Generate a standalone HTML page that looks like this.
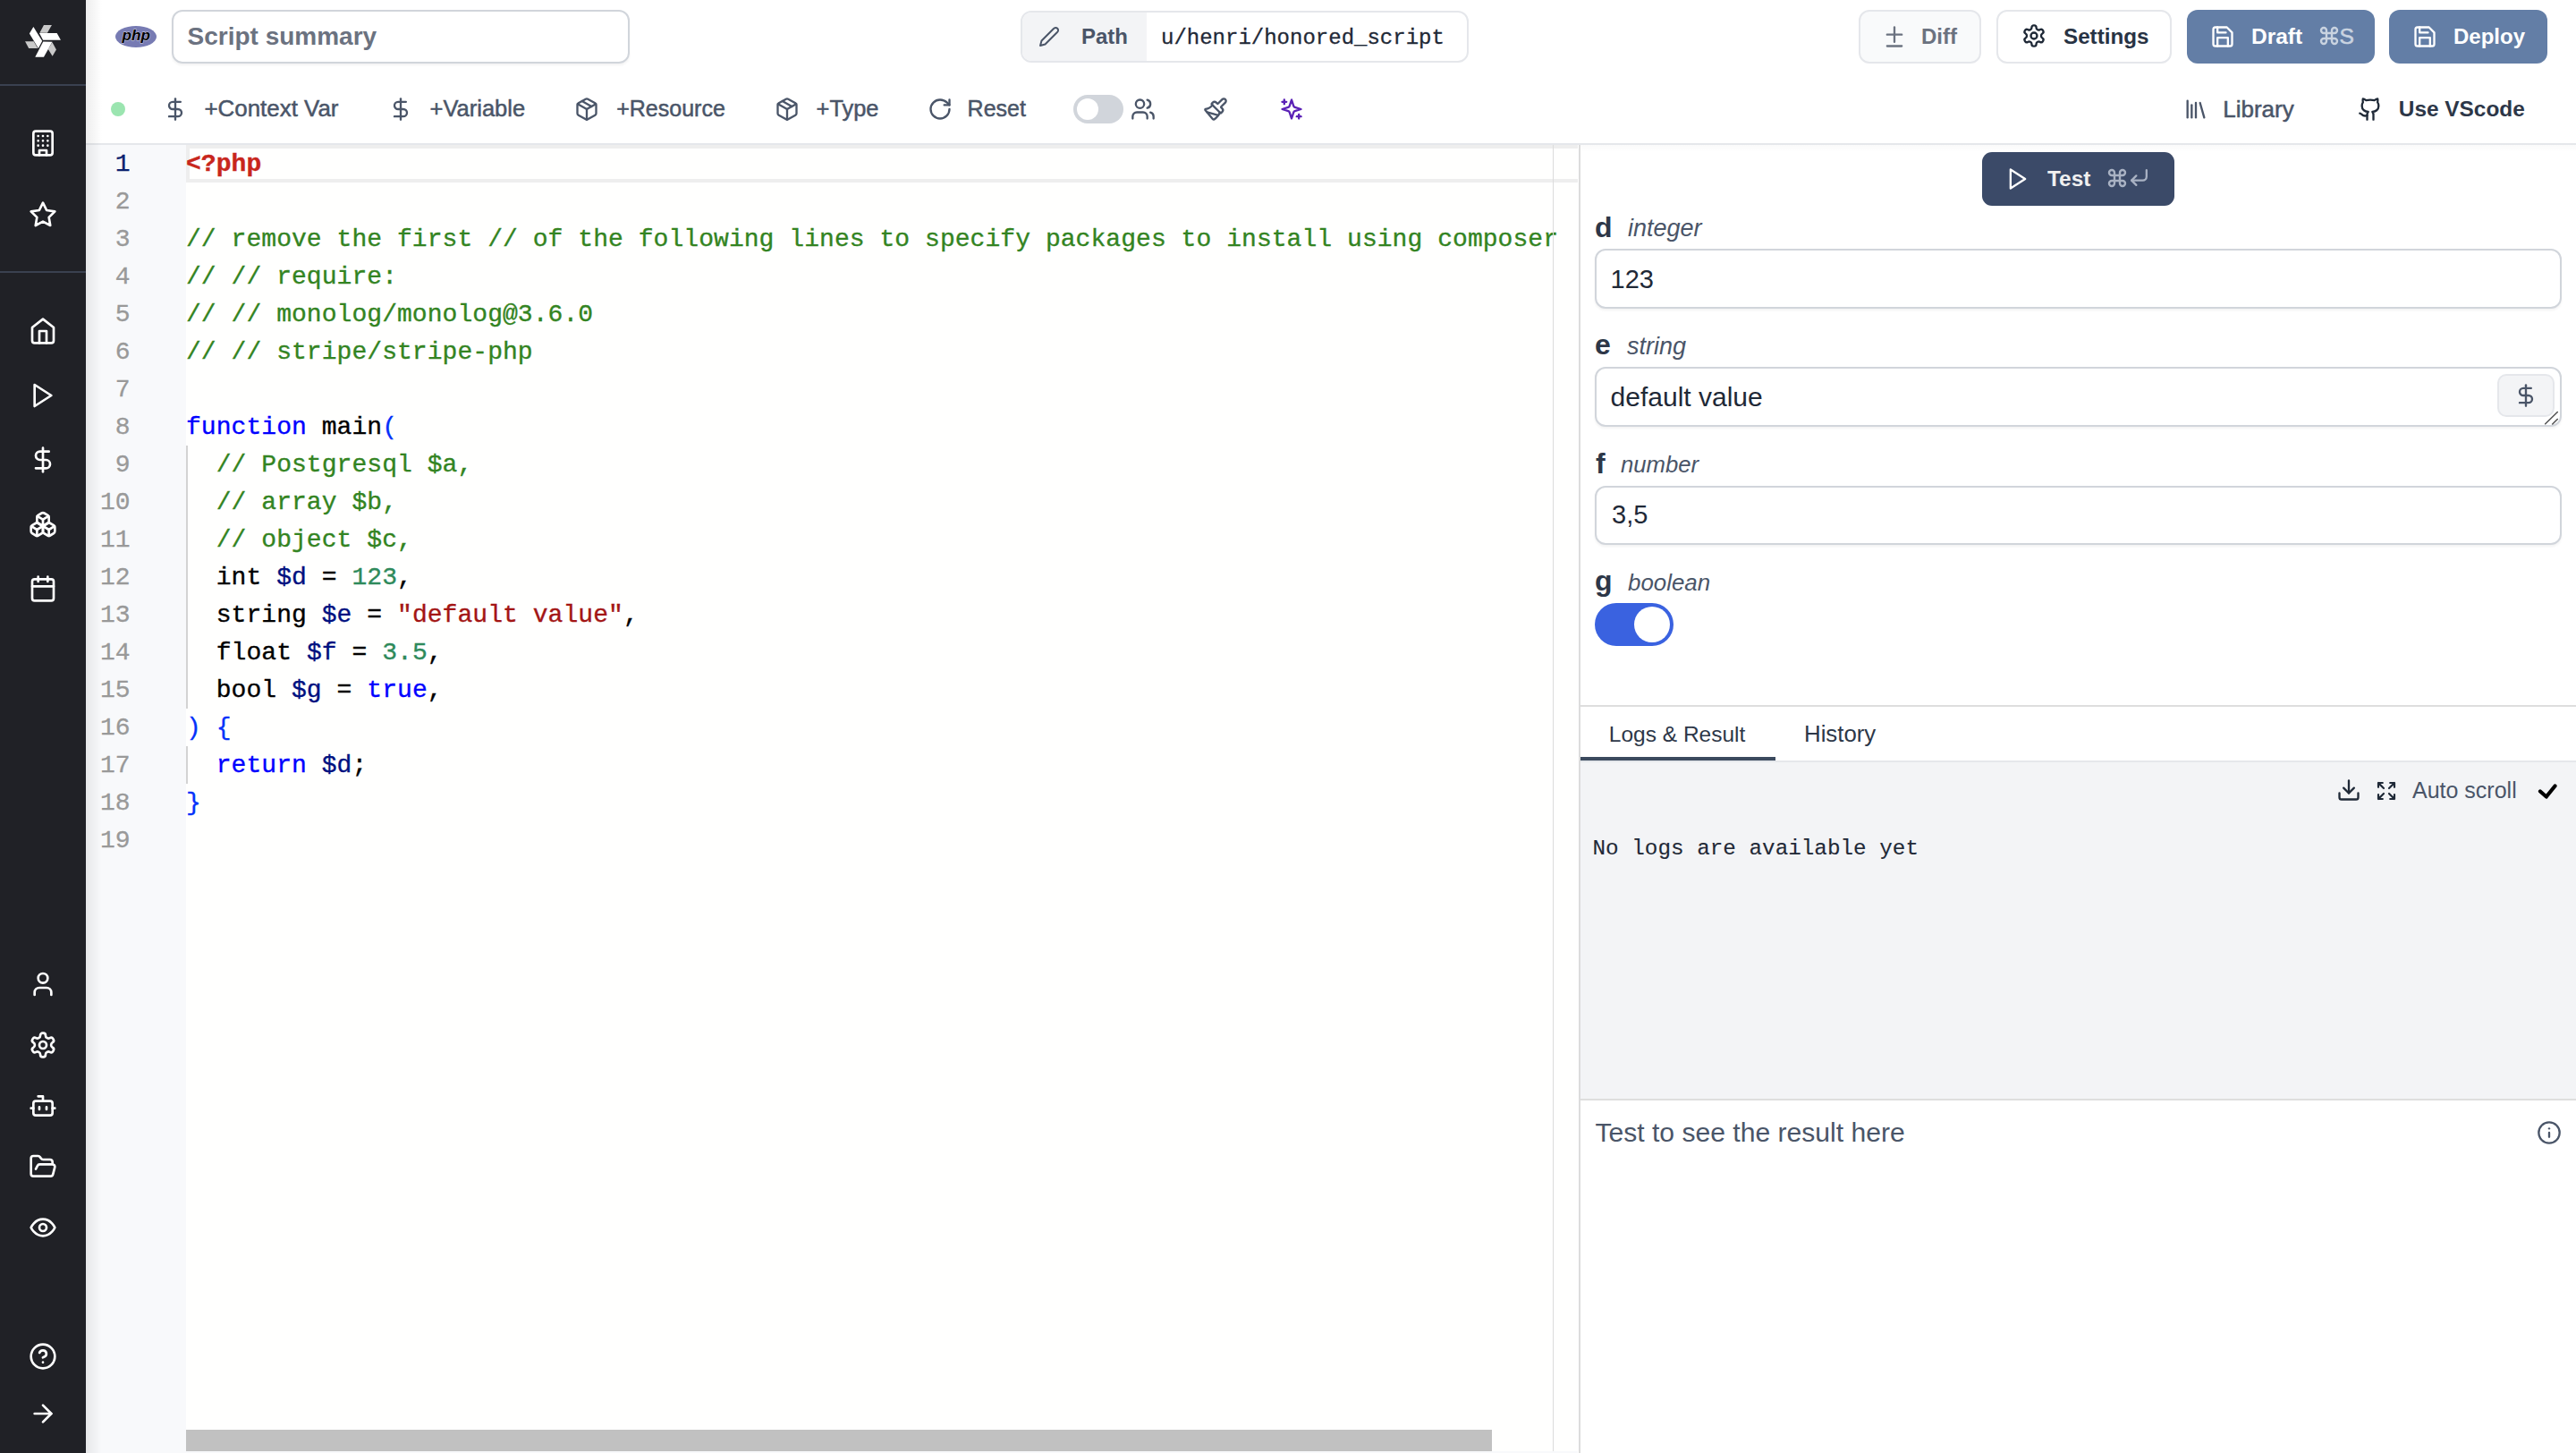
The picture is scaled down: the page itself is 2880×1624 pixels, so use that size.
<!DOCTYPE html>
<html><head><meta charset="utf-8">
<style>
*{margin:0;padding:0;box-sizing:border-box}
html,body{width:2880px;height:1624px;overflow:hidden;background:#fff;font-family:"Liberation Sans",sans-serif}
.a{position:absolute}
.t{position:absolute;white-space:nowrap;line-height:1}
.ic{position:absolute;fill:none;stroke:currentColor;stroke-linecap:round;stroke-linejoin:round}
#side{left:0;top:0;width:96px;height:1624px;background:#202126;z-index:5}
#shadow{position:absolute;left:96px;top:0;width:18px;height:1624px;background:linear-gradient(to right,rgba(0,0,0,0.07),rgba(0,0,0,0));z-index:4}
#side .ic{color:#fff;stroke-width:2}
.sep{position:absolute;left:0;width:96px;height:2px;background:#3a4150}
.btn{position:absolute;border-radius:12px}
.mono{font-family:"Liberation Mono",monospace}
.tb{color:#4a5568;font-size:25px;-webkit-text-stroke:0.5px #4a5568}
.tb2 .ic{color:#4a5568;stroke-width:2}
#code .ln{position:absolute;height:42px;line-height:42px;font-size:28px;white-space:pre;letter-spacing:0.055px;-webkit-text-stroke-width:0.35px}
.g{color:#338422}.k{color:#0000ff}.v{color:#001080}.n{color:#2e8a5b}.s{color:#a31515}.br{color:#0431fa}.red{color:#c8261c;font-weight:bold}
.num{position:absolute;left:96px;width:49.5px;text-align:right;height:42px;line-height:42px;font-size:28px;color:#999;-webkit-text-stroke-width:0.3px}
.lbl{font-size:32px;font-weight:bold;color:#2d3748}
.typ{font-size:27px;font-style:italic;color:#4a5568}
.inp{position:absolute;left:1783px;width:1081px;height:67px;border:2px solid #d1d5db;border-radius:12px;background:#fff;box-shadow:0 2px 3px rgba(0,0,0,0.05)}
.itx{font-size:29px;color:#1f2937}
</style></head><body>

<!-- SIDEBAR -->
<div id="side" class="a">
  <!-- logo -->
  <svg class="a" style="left:20px;top:20px" width="56" height="52" viewBox="0 0 56 52">
    <polygon points="8.05,26.3 17.71,26.3 22.18,33.99 12.16,33.99" fill="#c9c9c9"/>
    <polygon points="17.35,10.02 27.19,25.76 22.9,33.99 12.88,17.53" fill="#fff"/>
    <polygon points="28.98,8.05 37.92,8.05 32.92,16.64 24.33,16.64" fill="#c9c9c9"/>
    <polygon points="23.97,17.0 43.65,17.0 47.94,24.69 28.09,24.69" fill="#fff"/>
    <polygon points="38.46,27.19 42.93,35.42 38.64,42.75 33.81,34.88" fill="#c9c9c9"/>
    <polygon points="28.26,26.48 38.46,26.65 28.98,43.83 19.32,43.83" fill="#fff"/>
  </svg>
  <div class="sep" style="top:94px"></div>
  <!-- building -->
  <svg class="ic" style="left:32px;top:144px" width="32" height="32" viewBox="0 0 24 24"><rect x="4" y="2" width="16" height="20" rx="2"/><path d="M9 22v-4h6v4"/><path d="M8 6h.01M16 6h.01M12 6h.01M12 10h.01M12 14h.01M16 10h.01M16 14h.01M8 10h.01M8 14h.01"/></svg>
  <!-- star -->
  <svg class="ic" style="left:32px;top:224px" width="32" height="32" viewBox="0 0 24 24"><polygon points="12 2 15.09 8.26 22 9.27 17 14.14 18.18 21.02 12 17.77 5.82 21.02 7 14.14 2 9.27 8.91 8.26 12 2"/></svg>
  <div class="sep" style="top:303px"></div>
  <!-- home -->
  <svg class="ic" style="left:32px;top:354px" width="32" height="32" viewBox="0 0 24 24"><path d="m3 9 9-7 9 7v11a2 2 0 0 1-2 2H5a2 2 0 0 1-2-2z"/><path d="M9 22V12h6v10"/></svg>
  <!-- play -->
  <svg class="ic" style="left:32px;top:426px" width="32" height="32" viewBox="0 0 24 24"><polygon points="5 3 19 12 5 21 5 3"/></svg>
  <!-- dollar -->
  <svg class="ic" style="left:32px;top:498px" width="32" height="32" viewBox="0 0 24 24"><line x1="12" x2="12" y1="2" y2="22"/><path d="M17 5H9.5a3.5 3.5 0 0 0 0 7h5a3.5 3.5 0 0 1 0 7H6"/></svg>
  <!-- boxes -->
  <svg class="ic" style="left:32px;top:570px" width="32" height="32" viewBox="0 0 24 24"><path d="M2.97 12.92A2 2 0 0 0 2 14.63v3.24a2 2 0 0 0 .97 1.71l3 1.8a2 2 0 0 0 2.06 0L12 19v-5.5l-5-3-4.03 2.42Z"/><path d="m7 16.5-4.74-2.85"/><path d="m7 16.5 5-3"/><path d="M7 16.5v5.17"/><path d="M12 13.5V19l3.97 2.38a2 2 0 0 0 2.06 0l3-1.8a2 2 0 0 0 .97-1.71v-3.24a2 2 0 0 0-.97-1.71L17 10.5l-5 3Z"/><path d="m17 16.5-5-3"/><path d="m17 16.5 4.74-2.85"/><path d="M17 16.5v5.17"/><path d="M7.97 4.42A2 2 0 0 0 7 6.13v4.37l5 3 5-3V6.13a2 2 0 0 0-.97-1.71l-3-1.8a2 2 0 0 0-2.06 0l-3 1.8Z"/><path d="M12 8 7.26 5.15"/><path d="m12 8 4.74-2.85"/><path d="M12 13.5V8"/></svg>
  <!-- calendar -->
  <svg class="ic" style="left:32px;top:642px" width="32" height="32" viewBox="0 0 24 24"><rect x="3" y="4" width="18" height="18" rx="2"/><path d="M16 2v4M8 2v4M3 10h18"/></svg>
  <!-- user -->
  <svg class="ic" style="left:32px;top:1084px" width="32" height="32" viewBox="0 0 24 24"><path d="M19 21v-2a4 4 0 0 0-4-4H9a4 4 0 0 0-4 4v2"/><circle cx="12" cy="7" r="4"/></svg>
  <!-- settings -->
  <svg class="ic" style="left:32px;top:1152px" width="32" height="32" viewBox="0 0 24 24"><path d="M12.22 2h-.44a2 2 0 0 0-2 2v.18a2 2 0 0 1-1 1.73l-.43.25a2 2 0 0 1-2 0l-.15-.08a2 2 0 0 0-2.73.73l-.22.38a2 2 0 0 0 .73 2.73l.15.1a2 2 0 0 1 1 1.72v.51a2 2 0 0 1-1 1.74l-.15.09a2 2 0 0 0-.73 2.73l.22.38a2 2 0 0 0 2.73.73l.15-.08a2 2 0 0 1 2 0l.43.25a2 2 0 0 1 1 1.73V20a2 2 0 0 0 2 2h.44a2 2 0 0 0 2-2v-.18a2 2 0 0 1 1-1.73l.43-.25a2 2 0 0 1 2 0l.15.08a2 2 0 0 0 2.73-.73l.22-.39a2 2 0 0 0-.73-2.73l-.15-.08a2 2 0 0 1-1-1.74v-.5a2 2 0 0 1 1-1.74l.15-.09a2 2 0 0 0 .73-2.73l-.22-.38a2 2 0 0 0-2.73-.73l-.15.08a2 2 0 0 1-2 0l-.43-.25a2 2 0 0 1-1-1.73V4a2 2 0 0 0-2-2z"/><circle cx="12" cy="12" r="3"/></svg>
  <!-- bot -->
  <svg class="ic" style="left:32px;top:1220px" width="32" height="32" viewBox="0 0 24 24"><path d="M12 8V4H8"/><rect width="16" height="12" x="4" y="8" rx="2"/><path d="M2 14h2M20 14h2M15 13v2M9 13v2"/></svg>
  <!-- folder open -->
  <svg class="ic" style="left:32px;top:1288px" width="32" height="32" viewBox="0 0 24 24"><path d="m6 14 1.5-2.9A2 2 0 0 1 9.24 10H20a2 2 0 0 1 1.94 2.5l-1.54 6a2 2 0 0 1-1.95 1.5H4a2 2 0 0 1-2-2V5a2 2 0 0 1 2-2h3.9a2 2 0 0 1 1.69.9l.81 1.2a2 2 0 0 0 1.67.9H18a2 2 0 0 1 2 2v2"/></svg>
  <!-- eye -->
  <svg class="ic" style="left:32px;top:1356px" width="32" height="32" viewBox="0 0 24 24"><path d="M2 12s3-7 10-7 10 7 10 7-3 7-10 7-10-7-10-7Z"/><circle cx="12" cy="12" r="3"/></svg>
  <!-- help -->
  <svg class="ic" style="left:32px;top:1500px" width="32" height="32" viewBox="0 0 24 24"><circle cx="12" cy="12" r="10"/><path d="M9.09 9a3 3 0 0 1 5.83 1c0 2-3 3-3 3"/><path d="M12 17h.01"/></svg>
  <!-- arrow -->
  <svg class="ic" style="left:32px;top:1564px" width="32" height="32" viewBox="0 0 24 24"><path d="M5 12h14"/><path d="m12 5 7 7-7 7"/></svg>
</div>

<div id="shadow"></div>
<!-- TOP BAR -->
<div id="top">
  <svg class="a" style="left:128px;top:28px" width="48" height="26" viewBox="0 0 48 26"><ellipse cx="24" cy="13" rx="23" ry="12" fill="#777bb3"/><text x="8.5" y="16.6" font-family="Liberation Sans" font-weight="bold" font-style="italic" font-size="17.2" fill="#000" stroke="#fff" stroke-width="0.9" stroke-opacity="0.7" paint-order="stroke">php</text></svg>
  <div class="a" style="left:192px;top:11px;width:512px;height:60px;border:2px solid #d1d5db;border-radius:12px;box-shadow:0 2px 3px rgba(0,0,0,0.05)"></div>
  <div class="t" style="left:209.5px;top:27.3px;font-size:28px;font-weight:bold;color:#6b7280">Script summary</div>

  <div class="a" style="left:1141px;top:12px;width:501px;height:58px;border:2px solid #e5e7eb;border-radius:12px;overflow:hidden"><div class="a" style="left:0;top:0;width:139px;height:54px;background:#f3f4f6"></div></div>
  <svg class="ic" style="left:1161px;top:29px;color:#4a5568;stroke-width:2" width="24" height="24" viewBox="0 0 24 24"><path d="M17 3a2.85 2.83 0 1 1 4 4L7.5 20.5 2 22l1.5-5.5Z"/></svg>
  <div class="t" style="left:1209px;top:28.7px;font-size:24px;font-weight:bold;color:#4a5568">Path</div>
  <div class="t mono" style="left:1298px;top:30.6px;font-size:24px;color:#1f2937;-webkit-text-stroke-width:0.3px">u/henri/honored_script</div>

  <div class="btn" style="left:2078px;top:11px;width:137px;height:60px;background:#f9fafb;border:2px solid #e5e7eb"></div>
  <svg class="ic" style="left:2103.7px;top:26.7px;color:#6b7280;stroke-width:2" width="28" height="28" viewBox="0 0 24 24"><path d="M12 3v14"/><path d="M5 10h14"/><path d="M5 21h14"/></svg>
  <div class="t" style="left:2148px;top:29px;font-size:24px;font-weight:bold;color:#6b7280">Diff</div>

  <div class="btn" style="left:2232px;top:11px;width:196px;height:60px;background:#fff;border:2px solid #e5e7eb"></div>
  <svg class="ic" style="left:2260px;top:26px;color:#1f2937;stroke-width:2" width="28" height="28" viewBox="0 0 24 24"><path d="M12.22 2h-.44a2 2 0 0 0-2 2v.18a2 2 0 0 1-1 1.73l-.43.25a2 2 0 0 1-2 0l-.15-.08a2 2 0 0 0-2.73.73l-.22.38a2 2 0 0 0 .73 2.73l.15.1a2 2 0 0 1 1 1.72v.51a2 2 0 0 1-1 1.74l-.15.09a2 2 0 0 0-.73 2.730l.22.38a2 2 0 0 0 2.73.73l.15-.08a2 2 0 0 1 2 0l.43.25a2 2 0 0 1 1 1.73V20a2 2 0 0 0 2 2h.44a2 2 0 0 0 2-2v-.18a2 2 0 0 1 1-1.73l.43-.25a2 2 0 0 1 2 0l.15.08a2 2 0 0 0 2.73-.73l.22-.39a2 2 0 0 0-.73-2.73l-.15-.08a2 2 0 0 1-1-1.74v-.5a2 2 0 0 1 1-1.74l.15-.09a2 2 0 0 0 .73-2.73l-.22-.38a2 2 0 0 0-2.73-.73l-.15.08a2 2 0 0 1-2 0l-.43-.25a2 2 0 0 1-1-1.73V4a2 2 0 0 0-2-2z"/><circle cx="12" cy="12" r="3"/></svg>
  <div class="t" style="left:2307px;top:29px;font-size:24.2px;font-weight:bold;color:#283344">Settings</div>

  <div class="btn" style="left:2445px;top:11px;width:210px;height:60px;background:#637ea6"></div>
  <svg class="ic" style="left:2471px;top:27px;color:#fff;stroke-width:2" width="28" height="28" viewBox="0 0 24 24"><path d="M19 21H5a2 2 0 0 1-2-2V5a2 2 0 0 1 2-2h11l5 5v11a2 2 0 0 1-2 2z"/><path d="M17 21v-8H7v8"/><path d="M7 3v5h8"/></svg>
  <div class="t" style="left:2517px;top:28.8px;font-size:24.5px;font-weight:bold;color:#fff">Draft</div>
  <svg class="ic" style="left:2591.5px;top:28.2px;color:#c9d3e0;stroke-width:2.4" width="24" height="24" viewBox="0 0 24 24"><path d="M15 6v12a3 3 0 1 0 3-3H6a3 3 0 1 0 3 3V6a3 3 0 1 0-3 3h12a3 3 0 1 0-3-3"/></svg>
  <div class="t" style="left:2615.5px;top:28.5px;font-size:24.5px;color:#c9d3e0;-webkit-text-stroke:0.6px #c9d3e0">S</div>

  <div class="btn" style="left:2671px;top:11px;width:177px;height:60px;background:#637ea6"></div>
  <svg class="ic" style="left:2696.7px;top:27px;color:#fff;stroke-width:2" width="28" height="28" viewBox="0 0 24 24"><path d="M19 21H5a2 2 0 0 1-2-2V5a2 2 0 0 1 2-2h11l5 5v11a2 2 0 0 1-2 2z"/><path d="M17 21v-8H7v8"/><path d="M7 3v5h8"/></svg>
  <div class="t" style="left:2743px;top:29px;font-size:24px;font-weight:bold;color:#fff">Deploy</div>
</div>

<!-- TOOLBAR -->
<div id="tb" class="tb2">
  <div class="a" style="left:124px;top:114px;width:16px;height:16px;border-radius:8px;background:#9be5b0"></div>
  <svg class="ic" style="left:181.8px;top:107.8px" width="28" height="28" viewBox="0 0 24 24"><line x1="12" x2="12" y1="2" y2="22"/><path d="M17 5H9.5a3.5 3.5 0 0 0 0 7h5a3.5 3.5 0 0 1 0 7H6"/></svg>
  <div class="t tb" style="left:228.5px;top:108.5px;font-size:25.9px">+Context Var</div>
  <svg class="ic" style="left:433.7px;top:107.8px" width="28" height="28" viewBox="0 0 24 24"><line x1="12" x2="12" y1="2" y2="22"/><path d="M17 5H9.5a3.5 3.5 0 0 0 0 7h5a3.5 3.5 0 0 1 0 7H6"/></svg>
  <div class="t tb" style="left:480.6px;top:108.8px;font-size:25.5px">+Variable</div>
  <svg class="ic" style="left:641.9px;top:108.2px" width="28" height="28" viewBox="0 0 24 24"><path d="m7.5 4.27 9 5.15"/><path d="M21 8a2 2 0 0 0-1-1.73l-7-4a2 2 0 0 0-2 0l-7 4A2 2 0 0 0 3 8v8a2 2 0 0 0 1 1.73l7 4a2 2 0 0 0 2 0l7-4A2 2 0 0 0 21 16Z"/><path d="m3.3 7 8.7 5 8.7-5"/><path d="M12 22V12"/></svg>
  <div class="t tb" style="left:689.2px;top:109.2px">+Resource</div>
  <svg class="ic" style="left:866.2px;top:108.2px" width="28" height="28" viewBox="0 0 24 24"><path d="m7.5 4.27 9 5.15"/><path d="M21 8a2 2 0 0 0-1-1.73l-7-4a2 2 0 0 0-2 0l-7 4A2 2 0 0 0 3 8v8a2 2 0 0 0 1 1.73l7 4a2 2 0 0 0 2 0l7-4A2 2 0 0 0 21 16Z"/><path d="m3.3 7 8.7 5 8.7-5"/><path d="M12 22V12"/></svg>
  <div class="t tb" style="left:912.6px;top:109px;font-size:25.4px">+Type</div>
  <svg class="ic" style="left:1036.7px;top:108px" width="28" height="28" viewBox="0 0 24 24"><path d="M21 12a9 9 0 1 1-9-9c2.52 0 4.93 1 6.74 2.74L21 8"/><path d="M21 3v5h-5"/></svg>
  <div class="t tb" style="left:1081.6px;top:109.2px">Reset</div>
  <div class="a" style="left:1200px;top:106px;width:56px;height:32px;border-radius:16px;background:#d1d5db"><div class="a" style="left:4px;top:4px;width:24px;height:24px;border-radius:12px;background:#fff"></div></div>
  <svg class="ic" style="left:1263.8px;top:108px" width="28" height="28" viewBox="0 0 24 24"><path d="M16 21v-2a4 4 0 0 0-4-4H6a4 4 0 0 0-4 4v2"/><circle cx="9" cy="7" r="4"/><path d="M22 21v-2a4 4 0 0 0-3-3.87"/><path d="M16 3.13a4 4 0 0 1 0 7.75"/></svg>
  <svg class="ic" style="left:1345px;top:107.5px" width="28" height="28" viewBox="0 0 24 24"><path d="m14.622 17.897-10.68-2.913"/><path d="M18.376 2.622a1 1 0 1 1 3.002 3.002L17.36 9.643a.5.5 0 0 0 0 .707l.944.944a2.41 2.41 0 0 1 0 3.408l-.944.944a.5.5 0 0 1-.707 0L8.354 7.348a.5.5 0 0 1 0-.707l.944-.944a2.41 2.41 0 0 1 3.408 0l.944.944a.5.5 0 0 0 .707 0z"/><path d="M9 8c-1.804 2.71-3.97 3.46-6.583 3.948a.507.507 0 0 0-.302.819l7.32 8.883a1 1 0 0 0 1.185.204C12.735 20.405 16 16.792 16 15"/></svg>
  <svg class="ic" style="left:1430px;top:107.8px;color:#5b21b6" width="28" height="28" viewBox="0 0 24 24"><path d="m12 3-1.912 5.813a2 2 0 0 1-1.275 1.275L3 12l5.813 1.912a2 2 0 0 1 1.275 1.275L12 21l1.912-5.813a2 2 0 0 1 1.275-1.275L21 12l-5.813-1.912a2 2 0 0 1-1.275-1.275L12 3Z"/><path d="M5 3v4"/><path d="M19 17v4"/><path d="M3 5h4"/><path d="M17 19h4"/></svg>
  <svg class="ic" style="left:2440.6px;top:108px" width="28" height="28" viewBox="0 0 24 24"><path d="m16 6 4 14"/><path d="M12 6v14"/><path d="M8 8v12"/><path d="M4 4v16"/></svg>
  <div class="t tb" style="left:2485.2px;top:108.5px;font-size:26px">Library</div>
  <svg class="ic" style="left:2636px;top:107.5px;color:#1f2937" width="28" height="28" viewBox="0 0 24 24"><path d="M15 22v-4a4.8 4.8 0 0 0-1-3.5c3 0 6-2 6-5.5.08-1.25-.27-2.48-1-3.5.28-1.150.28-2.35 0-3.5 0 0-1 0-3 1.5-2.64-.5-5.36-.5-8 0C6 2 5 2 5 2c-.3 1.15-.3 2.35 0 3.5A5.403 5.403 0 0 0 4 9c0 3.5 3 5.5 6 5.5-.39.49-.68 1.05-.85 1.65-.17.6-.22 1.23-.15 1.85v4"/><path d="M9 18c-4.51 2-5-2-7-2"/></svg>
  <div class="t" style="left:2681.8px;top:109.8px;font-size:24.4px;font-weight:bold;color:#2d3748">Use VScode</div>
  <div class="a" style="left:96px;top:160px;width:2784px;height:2px;background:#e5e7eb"></div>
  <div class="a" style="left:1767px;top:162px;width:1113px;height:8px;background:linear-gradient(rgba(0,0,0,0.02),rgba(0,0,0,0));z-index:3"></div>
</div>

<!-- EDITOR -->
<div id="code">
  <div class="a" style="left:96px;top:162px;width:112px;height:1462px;background:#f8f9fb"></div>
  <div class="a" style="left:208px;top:162px;width:1557px;height:1462px;background:#fffffe"></div>
  <div class="a" style="left:208px;top:162px;width:1556px;height:42px;border:4px solid #eeeeee;border-right:0"></div>
  <div class="a" style="left:208px;top:498px;width:2px;height:294px;background:#d3d3d3"></div>
  <div class="a" style="left:208px;top:834px;width:2px;height:42px;background:#d3d3d3"></div>
  <div class="num mono" style="top:163.0px;color:#0b216f">1</div>
  <div class="ln mono" style="left:208px;top:163.0px"><span class="red">&lt;?php</span></div>
  <div class="num mono" style="top:205.0px;color:#999">2</div>
  <div class="ln mono" style="left:208px;top:205.0px"></div>
  <div class="num mono" style="top:247.0px;color:#999">3</div>
  <div class="ln mono" style="left:208px;top:247.0px"><span class="g">// remove the first // of the following lines to specify packages to install using composer</span></div>
  <div class="num mono" style="top:289.0px;color:#999">4</div>
  <div class="ln mono" style="left:208px;top:289.0px"><span class="g">// // require:</span></div>
  <div class="num mono" style="top:331.0px;color:#999">5</div>
  <div class="ln mono" style="left:208px;top:331.0px"><span class="g">// // monolog/monolog@3.6.0</span></div>
  <div class="num mono" style="top:373.0px;color:#999">6</div>
  <div class="ln mono" style="left:208px;top:373.0px"><span class="g">// // stripe/stripe-php</span></div>
  <div class="num mono" style="top:415.0px;color:#999">7</div>
  <div class="ln mono" style="left:208px;top:415.0px"></div>
  <div class="num mono" style="top:457.0px;color:#999">8</div>
  <div class="ln mono" style="left:208px;top:457.0px"><span class="k">function</span> main<span class="br">(</span></div>
  <div class="num mono" style="top:499.0px;color:#999">9</div>
  <div class="ln mono" style="left:208px;top:499.0px">  <span class="g">// Postgresql $a,</span></div>
  <div class="num mono" style="top:541.0px;color:#999">10</div>
  <div class="ln mono" style="left:208px;top:541.0px">  <span class="g">// array $b,</span></div>
  <div class="num mono" style="top:583.0px;color:#999">11</div>
  <div class="ln mono" style="left:208px;top:583.0px">  <span class="g">// object $c,</span></div>
  <div class="num mono" style="top:625.0px;color:#999">12</div>
  <div class="ln mono" style="left:208px;top:625.0px">  int <span class="v">$d</span> = <span class="n">123</span>,</div>
  <div class="num mono" style="top:667.0px;color:#999">13</div>
  <div class="ln mono" style="left:208px;top:667.0px">  string <span class="v">$e</span> = <span class="s">"default value"</span>,</div>
  <div class="num mono" style="top:709.0px;color:#999">14</div>
  <div class="ln mono" style="left:208px;top:709.0px">  float <span class="v">$f</span> = <span class="n">3.5</span>,</div>
  <div class="num mono" style="top:751.0px;color:#999">15</div>
  <div class="ln mono" style="left:208px;top:751.0px">  bool <span class="v">$g</span> = <span class="k">true</span>,</div>
  <div class="num mono" style="top:793.0px;color:#999">16</div>
  <div class="ln mono" style="left:208px;top:793.0px"><span class="br">)</span> <span class="br">{</span></div>
  <div class="num mono" style="top:835.0px;color:#999">17</div>
  <div class="ln mono" style="left:208px;top:835.0px">  <span class="k">return</span> <span class="v">$d</span>;</div>
  <div class="num mono" style="top:877.0px;color:#999">18</div>
  <div class="ln mono" style="left:208px;top:877.0px"><span class="br">}</span></div>
  <div class="num mono" style="top:919.0px;color:#999">19</div>
  <div class="ln mono" style="left:208px;top:919.0px"></div>
  <div class="a" style="left:1736px;top:162px;width:1px;height:1462px;background:#dcdcdc"></div>
  <div class="a" style="left:208px;top:1598px;width:1460px;height:24px;background:#c1c1c1"></div>
  <div class="a" style="left:96px;top:1622px;width:1669px;height:2px;background:#f8f9fb"></div>
  <div class="a" style="left:1764px;top:162px;width:1px;height:1462px;background:#fff"></div>
  <div class="a" style="left:1765px;top:162px;width:2px;height:1462px;background:#dcdcdc"></div>
</div>

<!-- RIGHT PANEL -->
<div id="right">
  <div class="btn" style="left:2216px;top:170px;width:215px;height:60px;background:#3b4a68;border-radius:11px"></div>
  <svg class="ic" style="left:2242px;top:185.7px;color:#fff;stroke-width:2" width="28" height="28" viewBox="0 0 24 24"><polygon points="5 3 19 12 5 21 5 3"/></svg>
  <div class="t" style="left:2289px;top:187.5px;font-size:24.4px;font-weight:bold;color:#f0f0f0">Test</div>
  <svg class="ic" style="left:2354.5px;top:187px;color:#a9b2c3;stroke-width:2.4" width="24" height="24" viewBox="0 0 24 24"><path d="M15 6v12a3 3 0 1 0 3-3H6a3 3 0 1 0 3 3V6a3 3 0 1 0-3 3h12a3 3 0 1 0-3-3"/></svg>
  <svg class="ic" style="left:2379.4px;top:186px;color:#a9b2c3;stroke-width:2.2" width="25" height="25" viewBox="0 0 24 24"><polyline points="9 10 4 15 9 20"/><path d="M20 4v7a4 4 0 0 1-4 4H4"/></svg>

  <div class="t lbl" style="left:1783px;top:237.6px">d</div>
  <div class="t typ" style="left:1820px;top:242px">integer</div>
  <div class="inp" style="top:278px"></div>
  <div class="t itx" style="left:1800.5px;top:297.5px">123</div>

  <div class="t lbl" style="left:1783px;top:369.2px">e</div>
  <div class="t typ" style="left:1819px;top:374px">string</div>
  <div class="inp" style="top:410px;height:67px"></div>
  <div class="t itx" style="left:1800.6px;top:428.6px;font-size:30px">default value</div>
  <div class="a" style="left:2792px;top:418px;width:64px;height:48px;background:#f3f4f6;border:2px solid #e5e7eb;border-radius:10px"></div>
  <svg class="ic" style="left:2810.2px;top:427.8px;color:#4a5568;stroke-width:2" width="28" height="28" viewBox="0 0 24 24"><line x1="12" x2="12" y1="2" y2="22"/><path d="M17 5H9.5a3.5 3.5 0 0 0 0 7h5a3.5 3.5 0 0 1 0 7H6"/></svg>
  <svg class="a" style="left:2844px;top:459px" width="17" height="17" viewBox="0 0 17 17"><path d="M15.3 1.5 1.7 14.8M15.3 9.5 9.7 15" stroke="#555" stroke-width="1.6" fill="none" stroke-linecap="round"/></svg>

  <div class="t lbl" style="left:1784px;top:501.8px">f</div>
  <div class="t typ" style="left:1812px;top:507px;font-size:25.7px">number</div>
  <div class="inp" style="top:543px;height:66px"></div>
  <div class="t itx" style="left:1802px;top:560.5px">3,5</div>

  <div class="t lbl" style="left:1783px;top:632.6px">g</div>
  <div class="t typ" style="left:1820px;top:639px;font-size:25.9px">boolean</div>
  <div class="a" style="left:1783px;top:674px;width:88px;height:48px;border-radius:24px;background:#3a62e0"><div class="a" style="left:44px;top:4px;width:40px;height:40px;border-radius:20px;background:#fff"></div></div>

  <div class="a" style="left:1767px;top:788px;width:1113px;height:2px;background:#dedede"></div>
  <div class="t" style="left:1798.8px;top:809.3px;font-size:24.5px;color:#2d3748">Logs &amp; Result</div>
  <div class="t" style="left:2017px;top:808.4px;font-size:25.8px;color:#2d3748">History</div>
  <div class="a" style="left:1767px;top:850px;width:1113px;height:2px;background:#e5e7eb"></div>
  <div class="a" style="left:1767px;top:846px;width:218px;height:4px;background:#3b4a5e"></div>
  <div class="a" style="left:1767px;top:852px;width:1113px;height:376px;background:#f3f4f6"></div>
  <svg class="ic" style="left:2611.7px;top:868.6px;color:#1f2937;stroke-width:2" width="28" height="28" viewBox="0 0 24 24"><path d="M21 15v4a2 2 0 0 1-2 2H5a2 2 0 0 1-2-2v-4"/><polyline points="7 10 12 15 17 10"/><line x1="12" x2="12" y1="15" y2="3"/></svg>
  <svg class="ic" style="left:2656px;top:872px;color:#1f2937;stroke-width:2.2" width="24" height="24" viewBox="0 0 24 24"><path d="m21 21-6-6m6 6v-4.8m0 4.8h-4.8"/><path d="M3 16.2V21m0 0h4.8M3 21l6-6"/><path d="M21 7.8V3m0 0h-4.8M21 3l-6 6"/><path d="M3 7.8V3m0 0h4.8M3 3l6 6"/></svg>
  <div class="t" style="left:2697px;top:871.4px;font-size:25px;color:#4a5568">Auto scroll</div>
  <svg class="a" style="left:2837px;top:875px" width="22" height="18" viewBox="0 0 22 18"><path d="M3 9.5 9.8 15.5 19.5 3.5" stroke="#000" stroke-width="4.2" fill="none" stroke-linecap="round" stroke-linejoin="round"/></svg>
  <div class="t mono" style="left:1780.5px;top:937px;font-size:24.3px;color:#1f2937;-webkit-text-stroke-width:0.12px">No logs are available yet</div>
  <div class="a" style="left:1767px;top:1228px;width:1113px;height:2px;background:#dedede"></div>
  <div class="t" style="left:1783.4px;top:1250.5px;font-size:30.1px;color:#4a5568">Test to see the result here</div>
  <svg class="ic" style="left:2835.8px;top:1252.3px;color:#4a5568;stroke-width:2" width="28" height="28" viewBox="0 0 24 24"><circle cx="12" cy="12" r="10"/><path d="M12 16v-4"/><path d="M12 8h.01"/></svg>
</div>

</body></html>
